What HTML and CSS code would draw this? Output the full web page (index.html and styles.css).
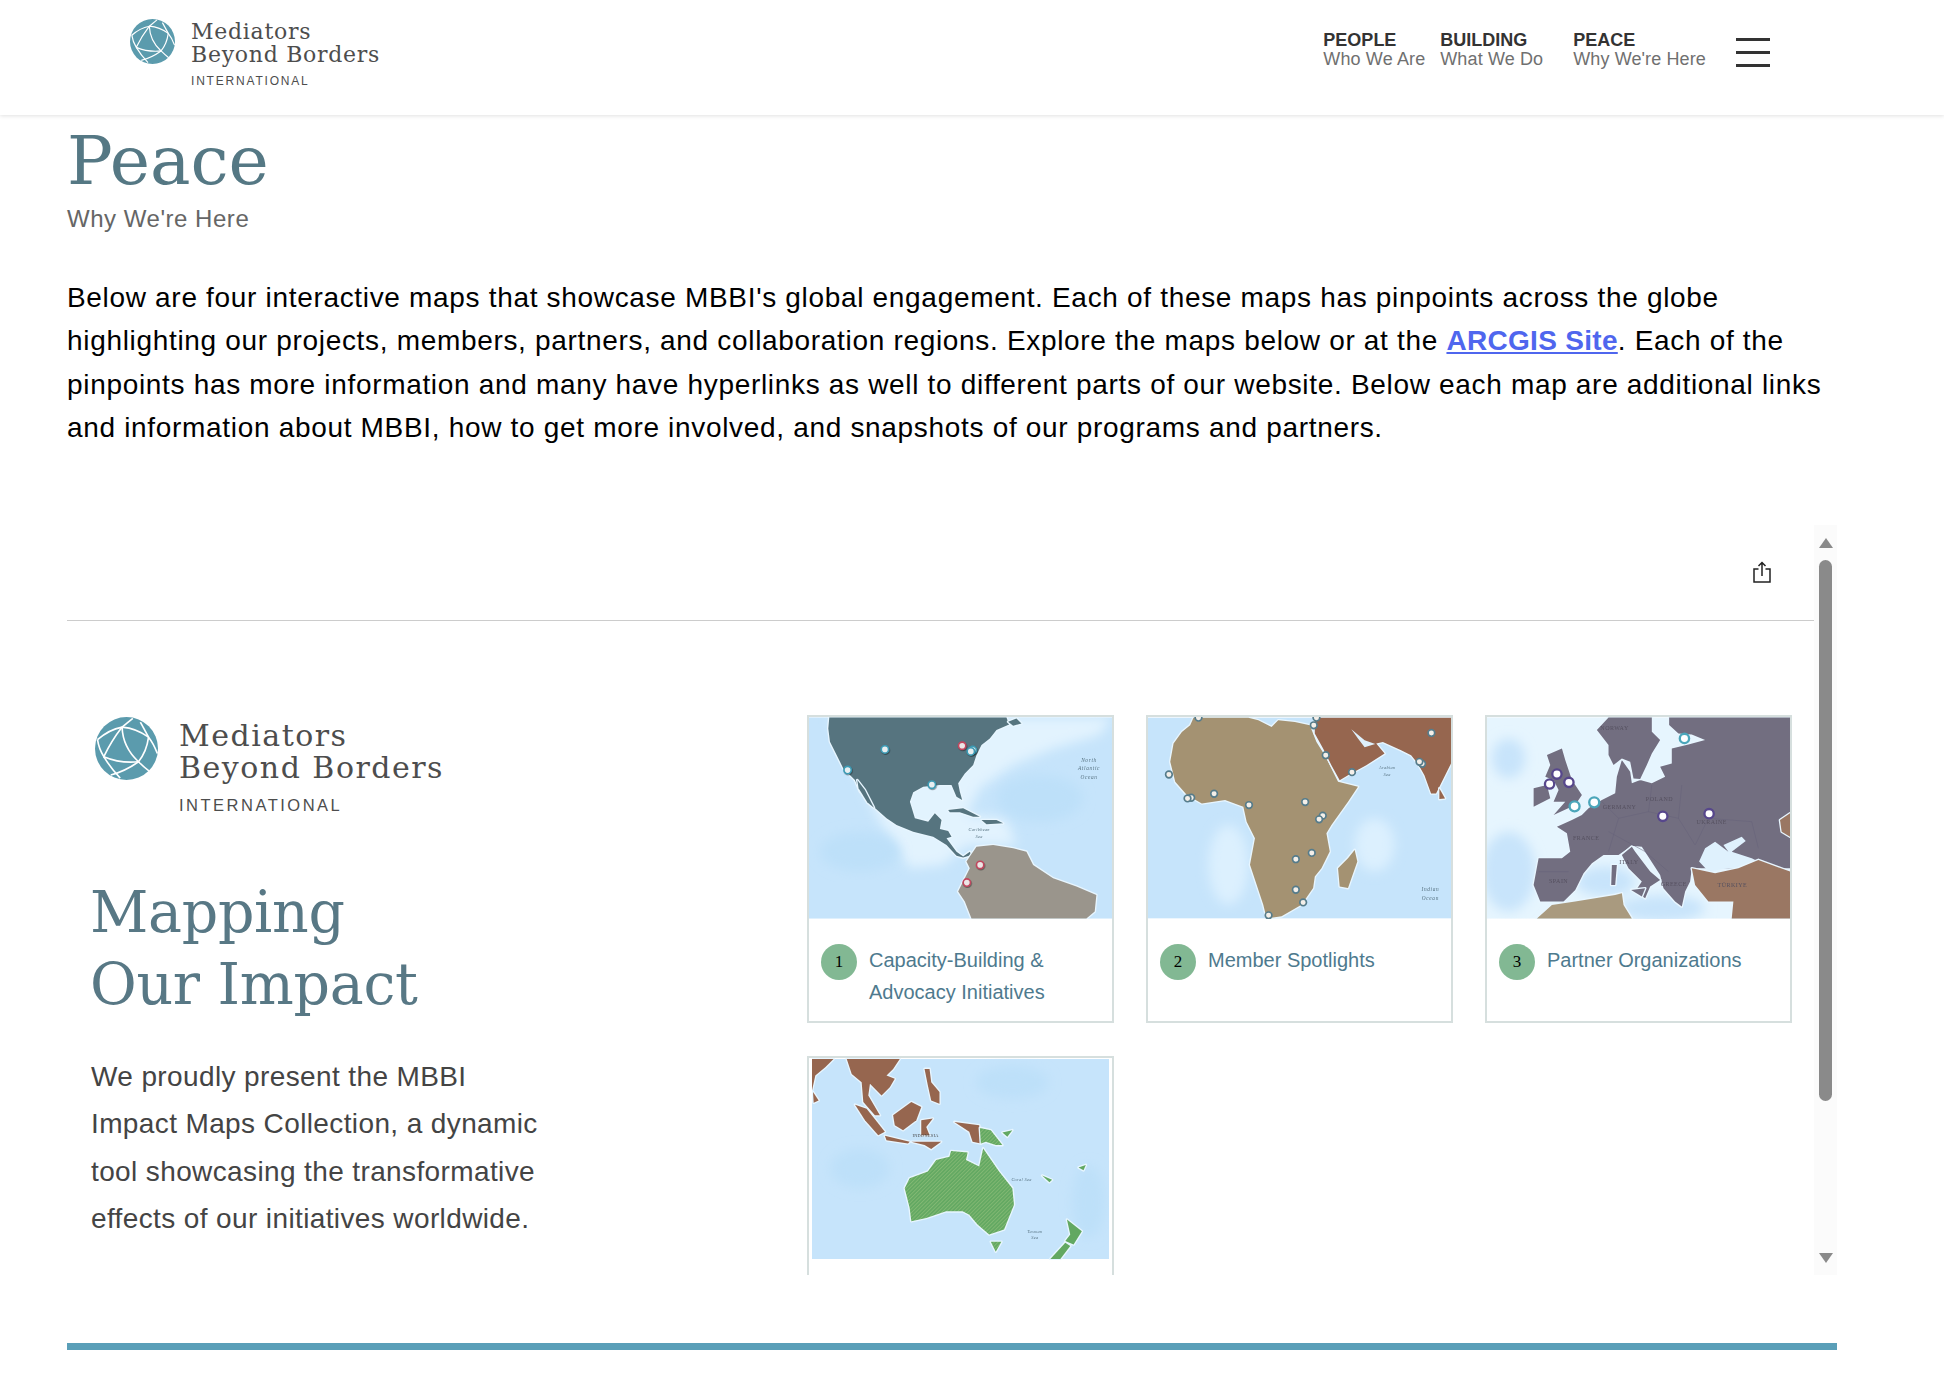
FILE: index.html
```html
<!DOCTYPE html>
<html lang="en">
<head>
    <meta charset="UTF-8">
    <meta name="viewport" content="width=device-width, initial-scale=1.0">
    <title>Peace - Mediators Beyond Borders International</title>
    <link rel="stylesheet" href="styles.css">
</head>
<body>
    <header class="site-header">
        <a class="logo" href="#">
            <svg class="globe" viewBox="0 0 100 100">
                <symbol id="globe-mark" viewBox="0 0 100 100">
                    <circle cx="50" cy="50" r="50" fill="#5b9bad"/>
                    <g fill="none" stroke="#fff" stroke-width="2.6">
                        <path d="M4 36Q22 20 43 16Q66 18 85 32Q93 42 99 58"/>
                        <path d="M43 16Q26 38 14 63Q6 50 4 36"/>
                        <path d="M43 16Q44 48 69 71Q78 80 86 86"/>
                        <path d="M85 32Q82 55 69 71Q48 86 25 92"/>
                        <path d="M14 63Q40 74 69 71"/>
                        <path d="M14 63Q24 80 40 97"/>
                        <path d="M43 16L60 2"/>
                        <path d="M85 32L72 8"/>
                    </g>
                </symbol>
                <use href="#globe-mark"/>
            </svg>
            <div class="logo-text">
                <div class="logo-name">Mediators<br>Beyond Borders</div>
                <div class="logo-sub">INTERNATIONAL</div>
            </div>
        </a>
        <nav class="main-nav">
            <a class="nav-item" href="#"><b>PEOPLE</b><span>Who We Are</span></a>
            <a class="nav-item nav-building" href="#"><b>BUILDING</b><span>What We Do</span></a>
            <a class="nav-item" href="#"><b>PEACE</b><span>Why We're Here</span></a>
            <div class="burger"><i></i><i></i><i></i></div>
        </nav>
    </header>

    <main class="content">
        <h1>Peace</h1>
        <p class="subtitle">Why We're Here</p>
        <p class="intro">Below are four interactive maps that showcase MBBI's global engagement. Each of these maps has pinpoints across the globe highlighting our projects, members, partners, and collaboration regions. Explore the maps below or at the <a href="#">ARCGIS Site</a>. Each of the pinpoints has more information and many have hyperlinks as well to different parts of our website. Below each map are additional links and information about MBBI, how to get more involved, and snapshots of our programs and partners.</p>

        <section class="embed">
            <div class="embed-main">
                <div class="embed-toolbar">
                    <svg class="share" viewBox="0 0 18 22" fill="none" stroke="#222" stroke-width="1.5">
                        <path d="M5.5 8H1v13h16V8h-4.500"/>
                        <path d="M9 15V1.500M5.500 5L9 1.500 12.500 5"/>
                    </svg>
                </div>
                <div class="embed-body">
                    <div class="embed-side">
                        <div class="logo logo-large">
                            <svg class="globe" viewBox="0 0 100 100"><use href="#globe-mark"/></svg>
                            <div class="logo-text">
                                <div class="logo-name">Mediators<br>Beyond Borders</div>
                                <div class="logo-sub">INTERNATIONAL</div>
                            </div>
                        </div>
                        <h2>Mapping<br>Our Impact</h2>
                        <p>We proudly present the MBBI Impact Maps Collection, a dynamic tool showcasing the transformative effects of our initiatives worldwide.</p>
                    </div>
                    <div class="cards">
                        <div class="card">
                            <svg class="map" viewBox="27 37 910 604">
                                <defs>
                                    <filter id="soft"><feGaussianBlur stdDeviation="18"/></filter>
                                </defs>
                                <rect class="sea" x="27" y="37" width="910" height="604"/>
                                <g filter="url(#soft)" fill="#e2f3fe">
                                    <path d="M640 37L937 37 900 90 760 130 640 180 540 250 500 330 620 340 650 420 500 420 430 480 330 490 240 350 90 37Z"/>
                                </g>
                                <g filter="url(#soft)" fill="#bde0f9">
                                    <ellipse cx="720" cy="280" rx="130" ry="70"/>
                                    <ellipse cx="180" cy="440" rx="120" ry="60"/>
                                </g>
                                <path class="land land-teal" d="M88 37L620 37 628 58 590 75 570 100 545 120 530 150 520 180 495 205 475 235 480 260 487 285 470 275 455 240 420 240 370 245 340 262 330 290 345 340 385 350 405 325 425 345 420 372 445 378 455 395 440 400 470 440 490 455 510 440 515 450 490 458 470 452 440 420 400 395 340 380 290 360 260 340 215 300 180 260 165 225 130 190 110 150 90 110 85 70Z"/>
                                <path class="land land-teal" d="M172 225L195 255 222 308 202 292 176 250Z"/>
                                <path class="land land-teal" d="M445 315L490 310 540 335 520 335 480 322 450 322Z"/>
                                <path class="land land-teal" d="M545 345L590 345 610 355 560 358Z"/>
                                <path class="land land-teal" d="M625 50L650 40 665 55 640 62Z"/>
                                <path class="land land-grey" d="M510 455L530 425 580 420 640 430 680 440 700 480 760 520 830 545 890 570 885 620 860 641 515 641 495 590 475 560 490 530 510 490 500 470Z"/>
                                <text class="map-label" x="868" y="170">North</text>
                                <text class="map-label" x="868" y="196">Atlantic</text>
                                <text class="map-label" x="868" y="222">Ocean</text>
                                <text class="map-label map-label-sm" x="538" y="378">Caribbean</text>
                                <text class="map-label map-label-sm" x="538" y="398">Sea</text>
                                <circle class="pin pin-blue" cx="255" cy="133" r="11"/>
                                <circle class="pin pin-blue" cx="143" cy="195" r="11"/>
                                <circle class="pin pin-blue" cx="396" cy="239" r="11"/>
                                <circle class="pin pin-blue" cx="519" cy="135" r="11"/>
                                <circle class="pin pin-blue" cx="513" cy="139" r="11"/>
                                <circle class="pin pin-red" cx="487" cy="122" r="11"/>
                                <circle class="pin pin-red" cx="541" cy="480" r="11"/>
                                <circle class="pin pin-red" cx="501" cy="533" r="11"/>
                            </svg>
                            <div class="card-label">
                                <span class="num">1</span>
                                <span class="card-title">Capacity-Building &amp; Advocacy Initiatives</span>
                            </div>
                        </div>
                        <div class="card">
                            <svg class="map" viewBox="38 37 912 604">
                                <rect class="sea" x="38" y="37" width="912" height="604"/>
                                <g filter="url(#soft)" fill="#dcf0fe">
                                    <ellipse cx="280" cy="480" rx="60" ry="120"/>
                                    <ellipse cx="720" cy="420" rx="60" ry="80"/>
                                </g>
                                <path class="land land-sand" d="M175 37L340 37 370 45 410 65 430 45 480 50 525 60 545 110 570 150 590 190 610 230 670 245 640 290 590 360 575 385 585 440 560 490 540 515 535 550 500 600 440 635 395 641 385 600 365 540 345 480 360 400 335 350 325 305 270 285 200 295 155 270 120 230 105 170 115 115 140 80 165 60Z"/>
                                <path class="land land-sand" d="M660 435L668 470 640 550 615 545 610 490 640 460Z"/>
                                <path class="land land-brown" d="M540 37L950 37 950 175 905 265 890 265 870 210 850 175 830 150 800 135 745 110 725 115 750 145 695 180 640 210 615 225 590 180 565 130 540 85Z"/>
                                <path class="land-water" d="M650 72L690 105 722 116 690 126 670 100Z"/>
                                <path class="land land-brown" d="M915 250L932 280 915 282Z"/>
                                <text class="map-label map-label-sm" x="758" y="192">Arabian</text>
                                <text class="map-label map-label-sm" x="758" y="212">Sea</text>
                                <text class="map-label" x="888" y="560">Indian</text>
                                <text class="map-label" x="888" y="585">Ocean</text>
                                <circle class="pin pin-slate" cx="190" cy="37" r="10"/>
                                <circle class="pin pin-slate" cx="545" cy="37" r="10"/>
                                <circle class="pin pin-slate" cx="537" cy="60" r="10"/>
                                <circle class="pin pin-slate" cx="891" cy="83" r="10"/>
                                <circle class="pin pin-slate" cx="573" cy="150" r="10"/>
                                <circle class="pin pin-slate" cx="863" cy="176" r="10"/>
                                <circle class="pin pin-slate" cx="855" cy="170" r="10"/>
                                <circle class="pin pin-slate" cx="652" cy="201" r="10"/>
                                <circle class="pin pin-slate" cx="101" cy="208" r="10"/>
                                <circle class="pin pin-slate" cx="237" cy="266" r="10"/>
                                <circle class="pin pin-slate" cx="168" cy="278" r="10"/>
                                <circle class="pin pin-slate" cx="157" cy="280" r="10"/>
                                <circle class="pin pin-slate" cx="342" cy="300" r="10"/>
                                <circle class="pin pin-slate" cx="511" cy="291" r="10"/>
                                <circle class="pin pin-slate" cx="564" cy="332" r="10"/>
                                <circle class="pin pin-slate" cx="553" cy="343" r="10"/>
                                <circle class="pin pin-slate" cx="531" cy="444" r="10"/>
                                <circle class="pin pin-slate" cx="483" cy="463" r="10"/>
                                <circle class="pin pin-slate" cx="483" cy="555" r="10"/>
                                <circle class="pin pin-slate" cx="505" cy="593" r="10"/>
                                <circle class="pin pin-slate" cx="401" cy="632" r="10"/>
                            </svg>
                            <div class="card-label">
                                <span class="num">2</span>
                                <span class="card-title">Member Spotlights</span>
                            </div>
                        </div>
                        <div class="card">
                            <svg class="map" viewBox="35 37 910 604">
                                <rect class="sea sea-light" x="35" y="37" width="910" height="604"/>
                                <g filter="url(#soft)" fill="#c8e4fb">
                                    <ellipse cx="100" cy="500" rx="80" ry="120"/>
                                    <ellipse cx="100" cy="160" rx="50" ry="60"/>
                                    <ellipse cx="560" cy="610" rx="130" ry="40"/>
                                    <ellipse cx="390" cy="530" rx="90" ry="45"/>
                                </g>
                                <path class="land land-violet" d="M582 37L945 37 945 490 650 490 645 530 630 560 620 605 600 590 565 550 555 510 500 425 470 422 430 450 385 450 350 475 325 505 300 555 265 590 195 590 175 540 190 460 260 460 285 440 275 385 245 365 290 345 320 330 340 310 380 285 420 265 425 215 440 165 465 200 470 235 495 225 530 235 570 215 555 185 590 175 590 130 640 118 690 105 650 88 610 85 582 60Z"/>
                                <path class="land land-violet" d="M365 75L400 37 530 37 530 80 555 105 530 145 515 180 495 222 475 220 465 170 440 160 415 180 400 150 400 120Z"/>
                                <path class="land land-violet" d="M440 450L470 425 480 440 525 500 555 525 525 545 510 580 480 560 500 530 460 490Z"/>
                                <path class="land land-violet" d="M215 150L260 130 270 165 290 225 320 270 300 300 235 330 270 290 235 290 250 255 235 225 210 215 225 180Z"/>
                                <path class="land land-violet" d="M175 250L215 240 225 280 175 305Z"/>
                                <path class="land land-violet" d="M410 480L425 480 420 540 408 540Z"/>
                                <path class="land land-violet" d="M468 555L510 550 500 575Z"/>
                                <path class="land-water" d="M672 470L690 430 720 410 760 440 745 420 800 395 812 408 770 440 830 460 850 470 825 490 760 490 700 500Z"/>
                                <path class="borders" d="M380 290L430 340 400 440M430 340L520 320 610 340 660 420M520 320L530 240M610 340L620 240M400 380L510 440 580 500M660 420L700 340 830 350 850 430M280 500L190 500"/>
                                <path class="land land-clay" d="M650 490L720 505 790 490 850 465 945 500 945 641 770 641 775 590 700 590 660 540Z"/>
                                <path class="land land-clay" d="M945 325L915 345 920 380 945 395Z"/>
                                <path class="land land-tan" d="M185 641L230 600 300 590 420 570 440 565 445 600 470 641Z"/>
                                <text class="country" x="418" y="75">NORWAY</text>
                                <text class="country" x="553" y="287">POLAND</text>
                                <text class="country" x="433" y="311">GERMANY</text>
                                <text class="country" x="710" y="357">UKRAINE</text>
                                <text class="country" x="333" y="406">FRANCE</text>
                                <text class="country" x="461" y="478">ITALY</text>
                                <text class="country" x="250" y="535">SPAIN</text>
                                <text class="country" x="596" y="542">GREECE</text>
                                <text class="country" x="772" y="545">TÜRKIYE</text>
                                <circle class="pin pin-violet" cx="245" cy="207" r="14"/>
                                <circle class="pin pin-violet" cx="223" cy="237" r="14"/>
                                <circle class="pin pin-violet" cx="281" cy="232" r="14"/>
                                <circle class="pin pin-violet" cx="563" cy="334" r="14"/>
                                <circle class="pin pin-violet" cx="702" cy="326" r="14"/>
                                <circle class="pin pin-aqua" cx="628" cy="100" r="14"/>
                                <circle class="pin pin-aqua" cx="298" cy="304" r="15"/>
                                <circle class="pin pin-aqua" cx="357" cy="292" r="15"/>
                            </svg>
                            <div class="card-label">
                                <span class="num">3</span>
                                <span class="card-title">Partner Organizations</span>
                            </div>
                        </div>
                        <div class="card card-inset">
                            <svg class="map" viewBox="35 40 897 604">
                                <defs>
                                    <pattern id="stripes" width="8" height="8" patternUnits="userSpaceOnUse" patternTransform="rotate(-45)">
                                        <rect width="8" height="8" fill="#62a862"/>
                                        <rect width="8" height="3" fill="#82b873"/>
                                    </pattern>
                                </defs>
                                <rect class="sea" x="35" y="40" width="897" height="604"/>
                                <g filter="url(#soft)" fill="#bde0f9">
                                    <ellipse cx="640" cy="110" rx="110" ry="50"/>
                                    <ellipse cx="870" cy="470" rx="50" ry="110"/>
                                    <ellipse cx="180" cy="370" rx="90" ry="60"/>
                                </g>
                                <path class="land land-brown" d="M35 40L100 40 75 65 45 90 35 135Z"/>
                                <path class="land land-brown" d="M140 40L300 40 280 70 260 90 285 100 270 125 245 150 210 115 205 150 240 210 225 210 190 170 185 110 155 85Z"/>
                                <path class="land land-brown" d="M38 140L55 165 40 172Z"/>
                                <path class="land land-brown" d="M165 178L200 190 255 260 235 270 195 225Z"/>
                                <path class="land land-brown" d="M255 272L330 290 325 295 260 285Z"/>
                                <path class="land land-brown" d="M335 290L425 290 395 312 375 300Z"/>
                                <path class="land land-brown" d="M280 210L335 170 365 185 350 225 310 255 285 240Z"/>
                                <path class="land land-brown" d="M365 225L400 220 380 245 390 270 365 270Z"/>
                                <path class="land land-brown" d="M375 70L390 70 395 110 420 140 420 175 395 165 385 120Z"/>
                                <path class="land land-brown" d="M465 230L540 240 545 295 520 290 510 260Z"/>
                                <path class="land land-stripes" d="M542 248L575 255 610 300 590 300 560 290 545 295Z"/>
                                <path class="land land-stripes" d="M455 318L505 322 500 345 540 365 552 310 600 380 640 430 645 480 615 555 570 570 535 540 510 510 490 500 440 500 380 520 335 530 330 490 315 430 330 400 385 380 410 345 450 335Z"/>
                                <path class="land land-stripes" d="M575 592L607 592 590 622Z"/>
                                <path class="land land-green" d="M805 525L850 560 825 600 800 590 815 570Z"/>
                                <path class="land land-green" d="M800 595L815 605 785 644 755 644Z"/>
                                <path class="land land-green" d="M730 392L760 405 752 412Z"/>
                                <path class="land land-green" d="M840 368L862 360 855 376Z"/>
                                <path class="land land-green" d="M610 262L640 255 625 275Z"/>
                                <text class="map-label map-label-sm" x="668" y="407">Coral Sea</text>
                                <text class="map-label map-label-sm" x="708" y="565">Tasman</text>
                                <text class="map-label map-label-sm" x="708" y="583">Sea</text>
                                <text class="map-label map-label-sm map-label-dark" x="378" y="275">INDONESIA</text>
                            </svg>
                        </div>
                    </div>
                </div>
            </div>
            <div class="scrollbar">
                <span class="arrow arrow-up"></span>
                <span class="thumb"></span>
                <span class="arrow arrow-down"></span>
            </div>
        </section>
        <div class="rule"></div>
    </main>
</body>
</html>
```

FILE: styles.css
```css
body {
    margin: 0;
    background-color: #fff;
    font-family: "Liberation Sans", Arial, sans-serif;
    color: #000;
}
a {
    color: inherit;
    text-decoration: none;
}

/* header */
.site-header {
    display: flex;
    justify-content: space-between;
    height: 115px;
    padding: 0 174px 0 130px;
    box-shadow: 0 1px 4px rgba(0, 0, 0, 0.12);
}
.logo {
    display: flex;
    align-items: flex-start;
    gap: 16px;
    padding-top: 19px;
}
.globe {
    width: 45px;
    height: 45px;
    flex: none;
}
.logo-name {
    font-family: "DejaVu Serif", serif;
    font-size: 22px;
    line-height: 23px;
    letter-spacing: 0.720px;
    color: #4d4d4d;
}
.logo-sub {
    margin-top: 8px;
    font-size: 12px;
    line-height: 14px;
    letter-spacing: 1.800px;
    color: #4d4d4d;
}
.logo-text {
    margin-top: 1px;
}
.main-nav {
    display: flex;
    align-items: flex-start;
    padding-top: 31px;
}
.nav-item {
    display: flex;
    flex-direction: column;
    font-size: 18px;
    line-height: 18.500px;
    margin-right: 15px;
}
.nav-building {
    margin-right: 30px;
}
.nav-item b {
    color: #333;
}
.nav-item span {
    color: #707070;
    letter-spacing: 0.120px;
}
.burger {
    display: flex;
    flex-direction: column;
    gap: 10px;
    width: 34px;
    margin: 7px 0 0 15px;
}
.burger i {
    height: 3px;
    background-color: #333;
}

/* page content */
.content {
    padding: 0 107px 0 67px;
}
h1 {
    margin: 0;
    padding-top: 4px;
    font-family: "DejaVu Serif", serif;
    font-size: 68px;
    line-height: 84px;
    font-weight: 400;
    color: #557884;
}
.subtitle {
    margin: 1px 0 0;
    font-size: 24px;
    line-height: 30px;
    letter-spacing: 0.530px;
    color: #666;
}
.intro {
    margin: 42px 0 0;
    font-size: 28px;
    line-height: 43.400px;
    letter-spacing: 0.680px;
}
.intro a {
    color: #4f66ee;
    font-weight: 700;
    letter-spacing: 0.300px;
    text-decoration: underline;
}

/* embedded maps panel */
.embed {
    display: flex;
    height: 750px;
    margin-top: 75px;
}
.embed-main {
    flex: 1;
    min-width: 0;
    overflow: hidden;
}
.embed-toolbar {
    display: flex;
    justify-content: flex-end;
    align-items: flex-start;
    height: 96px;
    padding: 36px 43px 0 0;
    box-sizing: border-box;
    border-bottom: 1px solid #ccc;
}
.share {
    width: 18px;
    height: 22px;
}
.embed-body {
    display: flex;
    padding-top: 94px;
}
.embed-side {
    width: 740px;
    flex: none;
}
.logo-large {
    gap: 21px;
    padding: 2px 0 0 28px;
}
.logo-large .globe {
    width: 63px;
    height: 63px;
}
.logo-large .logo-text {
    margin-top: 3px;
}
.logo-large .logo-name {
    font-size: 30px;
    line-height: 32px;
    letter-spacing: 1.500px;
}
.logo-large .logo-sub {
    margin-top: 12px;
    font-size: 16.500px;
    line-height: 18px;
    letter-spacing: 2.500px;
}
h2 {
    margin: 62px 0 0 23px;
    font-family: "DejaVu Serif", serif;
    font-size: 57px;
    line-height: 72px;
    font-weight: 400;
    letter-spacing: -0.300px;
    color: #587885;
}
.embed-side p {
    width: 465px;
    margin: 33px 0 0 24px;
    font-size: 28px;
    line-height: 47.600px;
    letter-spacing: 0.380px;
    color: #444;
}

/* map cards */
.cards {
    display: grid;
    grid-template-columns: repeat(3, 307px);
    grid-auto-rows: 308px;
    column-gap: 32px;
    row-gap: 33px;
    align-content: start;
}
.card {
    box-sizing: border-box;
    border: 2px solid #d6dfde;
    background-color: #fff;
}
.card-inset {
    padding: 0 3px;
}
.map {
    display: block;
    width: 100%;
    height: 202px;
    filter: blur(0.4px);
}
.card-label {
    display: flex;
    align-items: flex-start;
    gap: 12px;
    padding: 25px 12px 0 12px;
}
.num {
    display: flex;
    align-items: center;
    justify-content: center;
    width: 36px;
    height: 36px;
    flex: none;
    border-radius: 50%;
    background-color: #82b893;
    font-family: "Liberation Serif", serif;
    font-size: 17px;
}
.card-title {
    font-size: 20px;
    line-height: 32px;
    color: #4e7a8e;
}

/* map drawing */
.sea {
    fill: #c6e4fb;
}
.sea-light {
    fill: #e6f5fe;
}
.land {
    stroke: #e8f6ff;
    stroke-width: 8;
    stroke-linejoin: round;
    paint-order: stroke;
}
.land-teal { fill: #56747f; }
.land-grey { fill: #9a958c; }
.land-sand { fill: #a49272; }
.land-brown { fill: #96664f; }
.land-violet { fill: #726e80; }
.land-clay { fill: #9a7763; }
.land-tan { fill: #a99a7f; }
.land-green { fill: #62a862; }
.land-stripes { fill: url(#stripes); }
.land-water {
    fill: #dff1fd;
}
.borders {
    fill: none;
    stroke: #65617a;
    stroke-width: 1.500;
}
.map-label {
    font-family: "Liberation Serif", serif;
    font-size: 16px;
    font-style: italic;
    letter-spacing: 2px;
    text-anchor: middle;
    fill: #55707f;
}
.map-label-sm {
    font-size: 13px;
    letter-spacing: 1px;
}
.map-label-dark {
    font-style: normal;
    fill: #444;
}
.country {
    font-family: "Liberation Serif", serif;
    font-size: 18px;
    letter-spacing: 1.500px;
    text-anchor: middle;
    fill: #55505f;
}
.pin {
    stroke-width: 5;
    filter: drop-shadow(2px 3px 2px rgba(0, 0, 0, 0.35));
}
.pin-blue {
    fill: #e8eef0;
    stroke: #3c9bb5;
}
.pin-red {
    fill: #ece6e6;
    stroke: #c2475f;
}
.pin-slate {
    fill: #f4efe9;
    stroke: #567c8b;
    filter: none;
}
.pin-violet {
    fill: #fff;
    stroke: #57478c;
    stroke-width: 7;
    filter: none;
}
.pin-aqua {
    fill: #fff;
    stroke: #4ba6ba;
    stroke-width: 7;
    filter: none;
}

/* scrollbar */
.scrollbar {
    display: flex;
    flex-direction: column;
    align-items: center;
    justify-content: space-between;
    width: 23px;
    flex: none;
    box-sizing: border-box;
    padding: 13px 0 12px;
    background-color: #fbfbfb;
}
.thumb {
    width: 13px;
    height: 541px;
    margin: 12px 0 auto;
    border-radius: 7px;
    background-color: #8a8a8a;
}
.arrow {
    width: 0;
    height: 0;
    border-left: 7px solid transparent;
    border-right: 7px solid transparent;
}
.arrow-up {
    border-bottom: 10px solid #8a8a8a;
}
.arrow-down {
    border-top: 10px solid #8a8a8a;
}
.rule {
    height: 7px;
    margin-top: 68px;
    background-color: #5a9fb8;
}
```
